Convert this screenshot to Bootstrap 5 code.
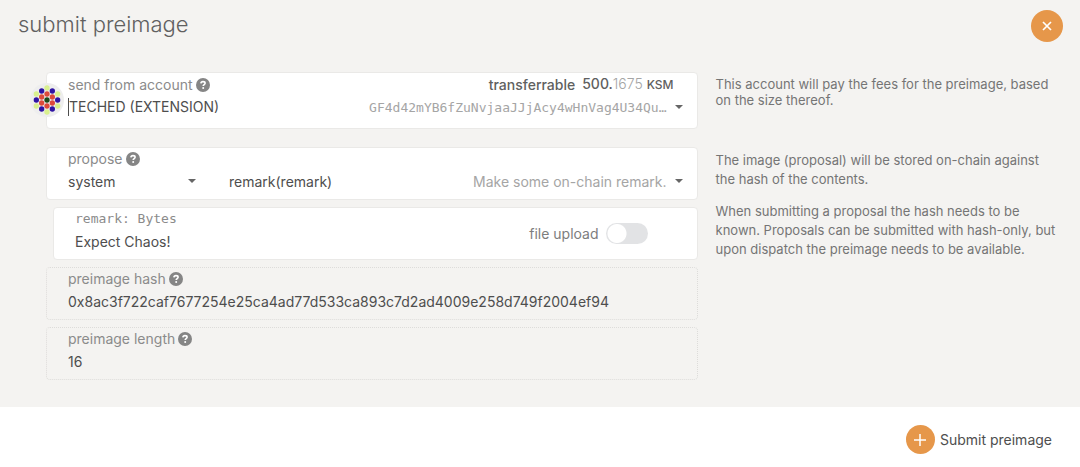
<!DOCTYPE html>
<html lang="en">
<head>
<meta charset="utf-8">
<meta name="viewport" content="width=device-width, initial-scale=1">
<title>submit preimage</title>
<link href="https://cdn.jsdelivr.net/npm/bootstrap@5.3.0/dist/css/bootstrap.min.css" rel="stylesheet">
<style>
body { font-family: Inter, "Liberation Sans", sans-serif; font-size: 14px; line-height: 19px; color: #4e4e4e; background: #fff; }
.dialog-main { background: #f4f3f1; padding-bottom: 27px; }
.dialog-head { padding: 10px 17px 0 18px; height: 72px; }
.dialog-head h1 { font-size: 22px; font-weight: 300; line-height: 28px; color: #606060; }
.round-btn { width: 32px; height: 32px; border: 0; border-radius: 50%; background: #e6974a; }
.form-grid { display: grid; grid-template-columns: 15fr 8fr; gap: 18px; padding: 0 17px 0 46px; }
.stack { display: flex; flex-direction: column; gap: 7px; min-width: 0; }
.field { position: relative; background: #fff; border: 1px solid #eae9e7; border-radius: 4px; padding: 2px 14px 5px 21px; min-width: 0; }
.field-account { padding-bottom: 8px; }
.field-nested { margin-left: 7px; }
.field-static { background: transparent; border: 1px dotted #dddcda; }
.field-label { line-height: 18px; color: #8b8b8b; display: flex; align-items: center; gap: 3px; }
.field-row { display: flex; align-items: center; height: 26px; }
.plain { appearance: none; border: 0; background: transparent; padding: 0; margin: 0; height: 26px; line-height: 26px; color: #4e4e4e; font: inherit; min-width: 0; outline: 0; }
.searching { border-left: 1px solid #4e4e4e; height: 18px; line-height: 18px; }
.mono { font-family: "DejaVu Sans Mono", "Liberation Mono", monospace; font-size: 13px; }
.faint { color: #a5a5a5; }
.arrow { width: 8px; height: 4px; flex: none; fill: #666; }
.section-select { width: 120px; }
.method-select { margin-left: 33px; }
.balance { color: #606060; margin-right: 9px; }
.unit { font-size: 12px; }
.identicon { position: absolute; left: -17px; top: 10px; width: 34px; height: 34px; }
.upload { position: absolute; right: 49px; top: 0; bottom: 0; display: flex; align-items: center; gap: 7px; color: #7d7d7d; }
.form-check-input.toggle { width: 42px; height: 21px; margin: 0; border: 0; box-shadow: none; background: #e2e3e5 radial-gradient(circle at 11px 50%, #fff 9px, transparent 10px); border-radius: 11px; }
.help { color: #757575; padding: 4px 3px 0 0; font-size: 13px; }
.help p { margin: 0 0 13px; }
.help-tight { line-height: 16px; }
.dialog-foot { padding: 18px 28px 14px; }
.submit { display: flex; align-items: center; gap: 5px; padding: 0; border: 0; background: transparent; color: #4e4e4e; }
.submit-icon { width: 29px; height: 29px; border-radius: 50%; background: #e6974a; }
</style>
</head>
<body>
<svg class="d-none">
  <symbol id="help" viewBox="0 0 14 14"><circle cx="7" cy="7" r="7" fill="#858585"/><path d="M4.9 5.4C5 4 6 3.6 7 3.6c1.2 0 2.1.6 2.1 1.6 0 1.4-1.9 1.4-1.9 2.8" fill="none" stroke="#fff" stroke-width="1.6"/><circle cx="7.2" cy="10.1" r="1" fill="#fff"/></symbol>
  <symbol id="down" viewBox="0 0 8 4"><path d="M0 0h8L4 4z"/></symbol>
</svg>
<main class="dialog-main">
  <header class="dialog-head d-flex justify-content-between align-items-start">
    <h1 class="m-0">submit preimage</h1>
    <button type="button" class="round-btn d-flex align-items-center justify-content-center p-0" aria-label="Close">
      <svg width="10" height="10" viewBox="0 0 10 10"><path d="M1 1l8 8M9 1L1 9" stroke="#fff" stroke-width="1.7"/></svg>
    </button>
  </header>
  <form id="preimage" class="form-grid">
    <div class="field field-account">
      <svg class="identicon" viewBox="-51 -51 102 102">
        <circle r="51" fill="#eee"/>
        <g fill="#d9f08f"><circle cy="-36" r="8"/><circle cy="36" r="8"/><circle cx="-32" cy="-18" r="8"/><circle cx="32" cy="-18" r="8"/><circle cx="-32" cy="18" r="8"/><circle cx="32" cy="18" r="8"/></g>
        <g fill="#2f14a3"><circle cx="-16" cy="-27" r="8"/><circle cx="16" cy="-27" r="8"/><circle cx="-16" cy="27" r="8"/><circle cx="16" cy="27" r="8"/><circle cx="-32" r="8"/><circle cx="32" r="8"/></g>
        <g fill="#dc4a3c"><circle cy="-18" r="8"/><circle cy="18" r="8"/><circle cx="-16" cy="-9" r="8"/><circle cx="16" cy="-9" r="8"/><circle cx="-16" cy="9" r="8"/><circle cx="16" cy="9" r="8"/></g>
        <circle r="8" fill="#1c4a1a"/>
      </svg>
      <div class="d-flex justify-content-between">
        <label class="field-label" for="account">send from account <svg width="14" height="14"><use href="#help"/></svg></label>
        <div class="field-label balance"><span class="fw-medium">transferrable</span><span class="ms-1"><span class="fw-medium">500.</span><span class="fw-light faint">1675</span> <span class="fw-medium unit">KSM</span></span></div>
      </div>
      <div class="field-row">
        <input id="account" class="plain searching flex-grow-1" type="text" value="TECHED (EXTENSION)">
        <span class="mono faint">GF4d42mYB6fZuNvjaaJJjAcy4wHnVag4U34Qu…</span>
        <svg class="arrow ms-2"><use href="#down"/></svg>
      </div>
    </div>
    <div class="help help-tight"><p>This account will pay the fees for the preimage, based on the size thereof.</p></div>

    <div class="stack">
      <div class="field">
        <label class="field-label" for="section">propose <svg width="14" height="14"><use href="#help"/></svg></label>
        <div class="field-row">
          <select id="section" class="plain section-select"><option>system</option></select>
          <svg class="arrow"><use href="#down"/></svg>
          <select class="plain method-select flex-grow-1" aria-label="method"><option>remark(remark)</option></select>
          <span class="faint">Make some on-chain remark.</span>
          <svg class="arrow ms-2"><use href="#down"/></svg>
        </div>
      </div>
      <div class="field field-nested">
        <label class="field-label mono" for="bytes">remark: Bytes</label>
        <div class="field-row"><input id="bytes" class="plain" type="text" value="Expect Chaos!"></div>
        <div class="upload"><label for="upload">file upload</label><input id="upload" class="form-check-input toggle" type="checkbox" role="switch"></div>
      </div>
      <div class="field field-static">
        <label class="field-label" for="hash">preimage hash <svg width="14" height="14"><use href="#help"/></svg></label>
        <div class="field-row"><input id="hash" class="plain w-100" type="text" readonly value="0x8ac3f722caf7677254e25ca4ad77d533ca893c7d2ad4009e258d749f2004ef94"></div>
      </div>
      <div class="field field-static">
        <label class="field-label" for="length">preimage length <svg width="14" height="14"><use href="#help"/></svg></label>
        <div class="field-row"><input id="length" class="plain w-100" type="text" readonly value="16"></div>
      </div>
    </div>
    <div class="help">
      <p>The image (proposal) will be stored on-chain against the hash of the contents.</p>
      <p>When submitting a proposal the hash needs to be known. Proposals can be submitted with hash-only, but upon dispatch the preimage needs to be available.</p>
    </div>
  </form>
</main>
<footer class="dialog-foot d-flex justify-content-end">
  <button class="submit" type="submit" form="preimage">
    <span class="submit-icon d-flex align-items-center justify-content-center"><svg width="12" height="12" viewBox="0 0 12 12"><path d="M6 0v12M0 6h12" stroke="#fff" stroke-width="1.5"/></svg></span>
    Submit preimage
  </button>
</footer>
<script src="https://cdn.jsdelivr.net/npm/bootstrap@5.3.0/dist/js/bootstrap.bundle.min.js"></script>
</body>
</html>
